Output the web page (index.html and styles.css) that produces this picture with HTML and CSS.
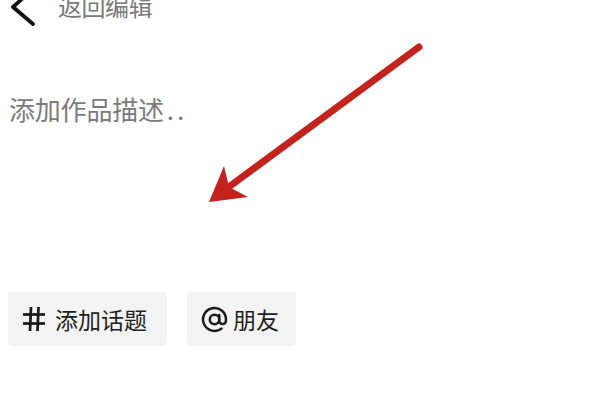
FILE: index.html
```html
<!DOCTYPE html>
<html lang="zh-CN">
<head>
<meta charset="utf-8">
<title>添加作品描述</title>
<link rel="stylesheet" href="styles.css">
</head>
<body>
<div class="page">
  <header class="header">
    <svg class="back" viewBox="0 0 26 40" width="26" height="40" aria-hidden="true">
      <polyline points="23,3 3,21 23,38" fill="none" stroke="#111" stroke-width="3.8" stroke-linecap="round" stroke-linejoin="round"/>
    </svg>
    <span class="back-text">返回编辑</span>
  </header>

  <div class="desc">添加作品描述<span class="dots">..</span></div>

  <div class="chips">
    <div class="chip chip-topic">
      <svg class="chip-icon hash" viewBox="0 0 24 26" width="24" height="26" aria-hidden="true">
        <g fill="none" stroke="#1a1a1a" stroke-width="2.7" stroke-linecap="butt">
          <line x1="1" y1="8.5" x2="23" y2="8.5"/>
          <line x1="1" y1="17.5" x2="23" y2="17.5"/>
          <line x1="9" y1="1" x2="8" y2="25"/>
          <line x1="16.5" y1="1" x2="15.5" y2="25"/>
        </g>
      </svg>
      <span class="chip-text">添加话题</span>
    </div>
    <div class="chip chip-friend">
      <svg class="chip-icon at" viewBox="0 0 24 24" width="27" height="27" aria-hidden="true">
        <g fill="none" stroke="#1a1a1a" stroke-width="2.2" stroke-linecap="round" stroke-linejoin="round">
          <circle cx="12" cy="12" r="4.2"/>
          <path d="M16.2 8v5a3 3 0 0 0 6 0v-1a10.2 10.2 0 1 0-4 8.1"/>
        </g>
      </svg>
      <span class="chip-text">朋友</span>
    </div>
  </div>

  <svg class="annotation" viewBox="0 0 600 400" width="600" height="400" aria-hidden="true">
    <line x1="419" y1="47" x2="226" y2="189" stroke="#c4221c" stroke-width="7" stroke-linecap="round"/>
    <polygon points="209,202 224,166 229,187 248,197" fill="#c4221c"/>
  </svg>
</div>
</body>
</html>
```

FILE: styles.css
```css
html, body {
  margin: 0;
  padding: 0;
  background: #ffffff;
}

body {
  font-family: "Noto Sans CJK SC", "Noto Sans", sans-serif;
  width: 600px;
  height: 400px;
  overflow: hidden;
}

.page {
  position: relative;
  width: 600px;
  height: 400px;
  display: flex;
  flex-direction: column;
}

.header {
  display: flex;
  align-items: center;
  height: 40px;
  margin-top: -14px;
  padding-left: 10px;
}

.back {
  display: block;
  flex: none;
}

.back-text {
  margin-left: 22px;
  font-size: 24px;
  line-height: 24px;
  color: #7a7a7a;
  letter-spacing: -0.5px;
}

.desc {
  margin-top: 70px;
  padding-left: 9px;
  font-size: 26px;
  line-height: 26px;
  color: #7b7b7b;
  letter-spacing: -0.2px;
}

.dots {
  margin-left: 3px;
  letter-spacing: 3px;
}

.chips {
  display: flex;
  gap: 20px;
  margin-top: 170px;
  padding-left: 8px;
}

.chip {
  display: flex;
  align-items: center;
  height: 54px;
  border-radius: 4px;
  background: #f3f3f3;
  padding-left: 14px;
  padding-right: 19px;
  box-sizing: border-box;
}

.chip-topic {
  width: 159px;
}

.chip-friend {
  width: 109px;
}

.chip-icon {
  display: block;
  flex: none;
}

.hash {
  margin-right: 9px;
}

.at {
  margin-right: 5px;
}

.chip-text {
  font-size: 23px;
  line-height: 23px;
  color: #1f1f1f;
  white-space: nowrap;
}

.annotation {
  position: absolute;
  left: 0;
  top: 0;
  pointer-events: none;
}
```
